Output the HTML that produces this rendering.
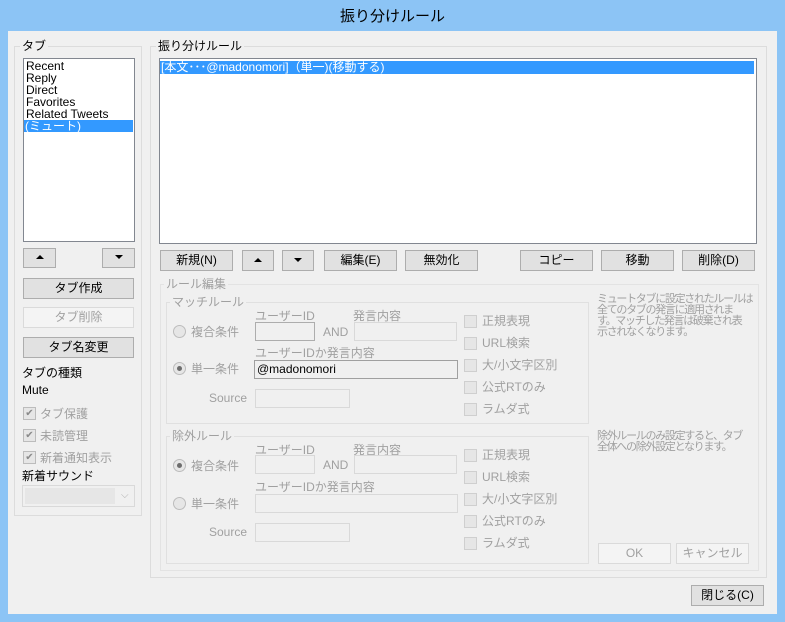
<!DOCTYPE html>
<html><head><meta charset="utf-8"><style>
*{margin:0;padding:0;box-sizing:border-box}
body{width:785px;height:622px;background:#8cc4f5;position:relative;overflow:hidden;font-family:"Liberation Sans","Noto Sans CJK JP",sans-serif;font-size:12px;color:#000}
.a{position:absolute;white-space:nowrap;line-height:12px}
#cl{position:absolute;left:8px;top:31px;width:769px;height:583px;background:#f0f0f0}
.g{position:absolute;border:1px solid #dcdcdc}
.lb{position:absolute;background:#f0f0f0;padding:0 2px;line-height:12px}
.lst{position:absolute;background:#fff;border:1px solid #828790}
.b{position:absolute;background:#e1e1e1;border:1px solid #adadad;text-align:center;line-height:18px}
.bd{position:absolute;background:#f4f4f4;border:1px solid #dadada;color:#a0a0a0;text-align:center;line-height:18px}
.tb{position:absolute;border:1px solid #d9d9d9;background:#f0f0f0}
.dis{color:#a0a0a0}
.cb{position:absolute;width:13px;height:13px;border:1px solid #cfcfcf;background:#e6e6e6}
.ck{position:absolute;width:13px;height:13px;border:1px solid #bcbcbc;background:#e6e6e6;font-size:10px;line-height:11px;text-align:center;color:#8a8a8a}
.rd{position:absolute;width:13px;height:13px;border-radius:50%;border:1px solid #bcbcbc;background:#e6e6e6}
.rd.on::after{content:"";position:absolute;left:3px;top:3px;width:5px;height:5px;border-radius:50%;background:#6d6d6d}
.tri{display:inline-block;width:0;height:0;border-left:4px solid transparent;border-right:4px solid transparent;vertical-align:middle}
.up{border-bottom:4px solid #000}.dn{border-top:4px solid #000}
.note{font-size:11px;letter-spacing:-1.3px;line-height:11px}
</style></head><body>
<div class="a" style="left:0;top:9px;width:785px;text-align:center;font-size:15px;line-height:16px">振り分けルール</div>
<div id="cl"></div>
<!-- left group -->
<div class="g" style="left:14px;top:46px;width:128px;height:470px"></div>
<div class="lb" style="left:20px;top:40px">タブ</div>
<div class="lst" style="left:23px;top:58px;width:112px;height:184px"></div>
<div class="a" style="left:26px;top:60px;line-height:12px">Recent<br>Reply<br>Direct<br>Favorites<br>Related Tweets</div>
<div class="a" style="left:24px;top:120px;width:109px;height:12px;background:#3399ff;color:#fff;padding-left:1px">(ミュート)</div>
<div class="b" style="left:23px;top:248px;width:33px;height:20px;line-height:14px"><span class="tri up"></span></div>
<div class="b" style="left:102px;top:248px;width:33px;height:20px;line-height:14px"><span class="tri dn"></span></div>
<div class="b" style="left:23px;top:278px;width:111px;height:21px">タブ作成</div>
<div class="bd" style="left:23px;top:307px;width:111px;height:21px">タブ削除</div>
<div class="b" style="left:23px;top:337px;width:111px;height:21px">タブ名変更</div>
<div class="a" style="left:22px;top:367px">タブの種類</div>
<div class="a" style="left:22px;top:384px">Mute</div>
<div class="ck" style="left:23px;top:407px">✔</div><div class="a dis" style="left:40px;top:408px">タブ保護</div>
<div class="ck" style="left:23px;top:429px">✔</div><div class="a dis" style="left:40px;top:430px">未読管理</div>
<div class="ck" style="left:23px;top:451px">✔</div><div class="a dis" style="left:40px;top:452px">新着通知表示</div>
<div class="a" style="left:22px;top:470px">新着サウンド</div>
<div class="tb" style="left:22px;top:485px;width:113px;height:22px;background:#f0f0f0;border-color:#d9d9d9"><div style="position:absolute;left:2px;top:2px;width:90px;height:16px;background:#e6e6e6"></div><div class="a" style="left:98px;top:4px;color:#b0b0b0;font-size:10px">⌵</div></div>
<!-- right group -->
<div class="g" style="left:150px;top:46px;width:617px;height:532px"></div>
<div class="lb" style="left:156px;top:40px">振り分けルール</div>
<div class="lst" style="left:159px;top:58px;width:598px;height:186px"></div>
<div class="a" style="left:160px;top:61px;width:594px;height:13px;background:#3399ff;color:#fff;padding-left:1px;line-height:13px">[本文･･･@madonomori]（単一)(移動する)</div>
<div class="b" style="left:160px;top:250px;width:73px;height:21px">新規(N)</div>
<div class="b" style="left:242px;top:250px;width:32px;height:21px;line-height:16px"><span class="tri up"></span></div>
<div class="b" style="left:282px;top:250px;width:32px;height:21px;line-height:16px"><span class="tri dn"></span></div>
<div class="b" style="left:324px;top:250px;width:73px;height:21px">編集(E)</div>
<div class="b" style="left:405px;top:250px;width:73px;height:21px">無効化</div>
<div class="b" style="left:520px;top:250px;width:73px;height:21px">コピー</div>
<div class="b" style="left:601px;top:250px;width:73px;height:21px">移動</div>
<div class="b" style="left:682px;top:250px;width:73px;height:21px">削除(D)</div>
<!-- rule edit -->
<div class="g" style="left:160px;top:284px;width:599px;height:287px;border-color:#e3e3e3"></div>
<div class="lb dis" style="left:164px;top:278px">ルール編集</div>
<div class="g" style="left:166px;top:302px;width:423px;height:122px;border-color:#e0e0e0"></div>
<div class="lb dis" style="left:170px;top:296px">マッチルール</div>
<div class="g" style="left:166px;top:436px;width:423px;height:128px;border-color:#e0e0e0"></div>
<div class="lb dis" style="left:170px;top:430px">除外ルール</div>
<!-- match -->
<div class="rd" style="left:173px;top:325px"></div><div class="a dis" style="left:191px;top:326px">複合条件</div>
<div class="a dis" style="left:255px;top:310px">ユーザーID</div>
<div class="tb" style="left:255px;top:322px;width:60px;height:19px;border-color:#adadad"></div>
<div class="a dis" style="left:323px;top:326px">AND</div>
<div class="a dis" style="left:353px;top:310px">発言内容</div>
<div class="tb" style="left:354px;top:322px;width:103px;height:19px"></div>
<div class="rd on" style="left:173px;top:362px"></div><div class="a dis" style="left:191px;top:363px">単一条件</div>
<div class="a dis" style="left:255px;top:347px">ユーザーIDか発言内容</div>
<div class="tb" style="left:254px;top:360px;width:204px;height:19px;border-color:#a0a0a0"></div>
<div class="a" style="left:257px;top:363px">@madonomori</div>
<div class="a dis" style="left:209px;top:392px">Source</div>
<div class="tb" style="left:255px;top:389px;width:95px;height:19px"></div>
<!-- exclude -->
<div class="rd on" style="left:173px;top:459px"></div><div class="a dis" style="left:191px;top:460px">複合条件</div>
<div class="a dis" style="left:255px;top:444px">ユーザーID</div>
<div class="tb" style="left:255px;top:455px;width:60px;height:19px"></div>
<div class="a dis" style="left:323px;top:459px">AND</div>
<div class="a dis" style="left:353px;top:444px">発言内容</div>
<div class="tb" style="left:354px;top:455px;width:103px;height:19px"></div>
<div class="rd" style="left:173px;top:497px"></div><div class="a dis" style="left:191px;top:498px">単一条件</div>
<div class="a dis" style="left:255px;top:481px">ユーザーIDか発言内容</div>
<div class="tb" style="left:255px;top:494px;width:203px;height:19px"></div>
<div class="a dis" style="left:209px;top:526px">Source</div>
<div class="tb" style="left:255px;top:523px;width:95px;height:19px"></div>
<!-- checks -->
<div class="cb" style="left:464px;top:315px"></div><div class="a dis" style="left:482px;top:315px">正規表現</div>
<div class="cb" style="left:464px;top:337px"></div><div class="a dis" style="left:482px;top:337px">URL検索</div>
<div class="cb" style="left:464px;top:359px"></div><div class="a dis" style="left:482px;top:359px">大/小文字区別</div>
<div class="cb" style="left:464px;top:381px"></div><div class="a dis" style="left:482px;top:381px">公式RTのみ</div>
<div class="cb" style="left:464px;top:403px"></div><div class="a dis" style="left:482px;top:403px">ラムダ式</div>
<div class="cb" style="left:464px;top:449px"></div><div class="a dis" style="left:482px;top:449px">正規表現</div>
<div class="cb" style="left:464px;top:471px"></div><div class="a dis" style="left:482px;top:471px">URL検索</div>
<div class="cb" style="left:464px;top:493px"></div><div class="a dis" style="left:482px;top:493px">大/小文字区別</div>
<div class="cb" style="left:464px;top:515px"></div><div class="a dis" style="left:482px;top:515px">公式RTのみ</div>
<div class="cb" style="left:464px;top:537px"></div><div class="a dis" style="left:482px;top:537px">ラムダ式</div>
<div class="a dis note" style="left:597px;top:294px">ミュートタブに設定されたルールは<br>全てのタブの発言に適用されま<br>す。マッチした発言は破棄され表<br>示されなくなります。</div>
<div class="a dis note" style="left:597px;top:431px">除外ルールのみ設定すると、タブ<br>全体への除外設定となります。</div>
<div class="bd" style="left:598px;top:543px;width:73px;height:21px">OK</div>
<div class="bd" style="left:676px;top:543px;width:73px;height:21px">キャンセル</div>
<div class="b" style="left:691px;top:585px;width:73px;height:21px">閉じる(C)</div>
</body></html>
